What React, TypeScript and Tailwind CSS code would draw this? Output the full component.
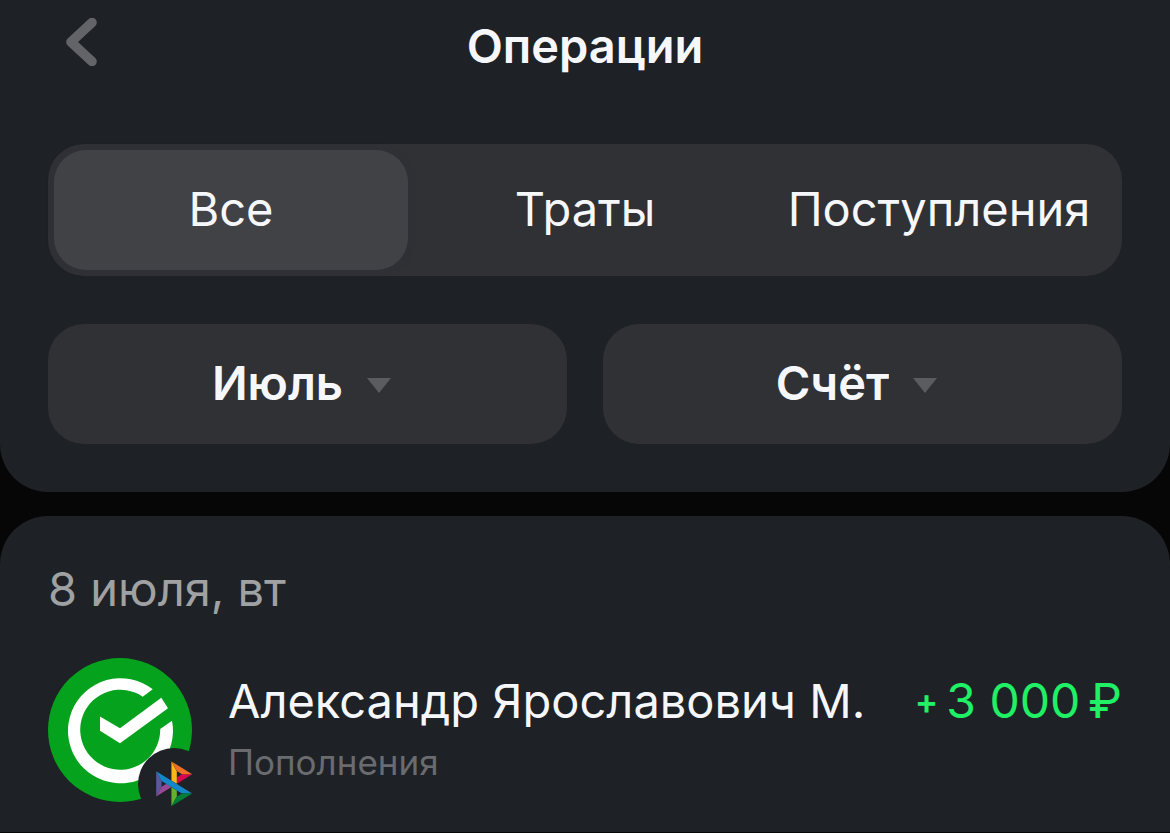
import { useState } from "react";

const tabs = ["Все", "Траты", "Поступления"];

function Filter({ id, label, options }: { id: string; label: string; options: string[] }) {
  return (
    <label
      htmlFor={id}
      className="flex h-[120px] items-center justify-center gap-6 rounded-[36px] bg-[#303135] pr-3 pb-0.5"
    >
      <select
        id={id}
        aria-label={label}
        className="field-sizing-content appearance-none bg-transparent text-[47px] leading-[56px] font-semibold text-[#f6f7fb] outline-none"
      >
        {options.map((o) => (
          <option key={o}>{o}</option>
        ))}
      </select>
      <svg width="24" height="15" viewBox="0 0 24 15" className="mt-1 shrink-0" aria-hidden="true">
        <path d="M0 0H24L12 15Z" fill="#5b5c60" />
      </svg>
    </label>
  );
}

function Avatar() {
  return (
    <svg
      width="144"
      height="144"
      viewBox="0 0 144 144"
      className="shrink-0 overflow-visible"
      aria-hidden="true"
    >
      <circle cx="72" cy="72" r="72" fill="#05a31d" />
      <path
        d="M104.7 31.3A52.5 52.5 0 1 0 124 62.7L112.2 71A40 40 0 1 1 94.7 38.7Z"
        fill="#fff"
      />
      <path d="M52 58.5L72 70.3L113.3 39.7L120 50.3L72 85.3L52 72.7Z" fill="#fff" />
      <circle cx="126" cy="126" r="36" fill="#1e2125" />
      <g transform="translate(108.2 103.4) scale(0.52 0.525)">
        <path d="M0 18.7L10.3 37.2V48.5L0 66.9Z" fill="#5b57a2" />
        <path d="M39.7 30.3L49.4 24.4H69.2L39.7 42.4Z" fill="#d90751" />
        <path d="M39.6 18.6L39.7 42.8L29.3 36.5V0Z" fill="#fab718" />
        <path d="M69.3 24.4H49.5L39.7 18.4L29.3 0Z" fill="#ed6f26" />
        <path d="M39.7 66.9V55.2L29.3 49V85.6Z" fill="#63b22f" />
        <path d="M0 66.9L29.5 48.9L19.6 42.8L10.3 48.5Z" fill="#984995" />
        <path d="M49.4 61.3L10.3 37.2L0 18.7L69.3 61.3Z" fill="#1487c9" />
        <path d="M29.3 85.6L39.7 66.9L49.4 61.3H69.3Z" fill="#017f36" />
      </g>
    </svg>
  );
}

export default function App() {
  const [active, setActive] = useState(0);

  return (
    <div className="flex min-h-screen flex-col gap-6 bg-[#060606] font-['Inter',sans-serif] text-[47px] leading-[56px] text-[#f6f7fb]">
      <header className="rounded-b-[48px] bg-[#1e2125] px-12 pt-[18px] pb-12">
        <div className="grid grid-cols-[1fr_auto_1fr] items-start">
          <button type="button" aria-label="Назад" className="w-fit pl-[18px]">
            <svg width="32" height="48" viewBox="0 0 32 48" fill="none" aria-hidden="true">
              <path
                d="M26 4.5L5 24L26 43.5"
                stroke="#636468"
                strokeWidth="9.6"
                strokeLinecap="round"
                strokeLinejoin="round"
              />
            </svg>
          </button>
          <h1 className="font-semibold">Операции</h1>
        </div>

        <div
          role="tablist"
          className="mt-[70px] grid grid-cols-3 rounded-[36px] bg-[#303135] p-1.5"
        >
          {tabs.map((tab, i) => (
            <button
              key={tab}
              type="button"
              role="tab"
              aria-selected={i === active}
              onClick={() => setActive(i)}
              className={
                i === active
                  ? "h-[120px] rounded-[32px] bg-[#414246] pb-0.5 shadow-[0_0_8px_rgba(40,44,60,0.2)]"
                  : "h-[120px] rounded-[32px] pb-0.5"
              }
            >
              {tab}
            </button>
          ))}
        </div>

        <div className="mt-12 grid grid-cols-2 gap-9">
          <Filter id="month" label="Месяц" options={["Июль"]} />
          <Filter id="account" label="Счёт" options={["Счёт"]} />
        </div>
      </header>

      <main className="rounded-t-[48px] bg-[#1e2125] px-12 pt-[45px] pb-[30px]">
        <h2 className="text-[#a0a1a3]">8 июля, вт</h2>
        <ul className="mt-[41px]">
          <li className="flex gap-9">
            <Avatar />
            <div className="min-w-0 flex-1 pt-[15px]">
              <div className="flex justify-between">
                <span>Александр Ярославович М.</span>
                <span className="flex shrink-0 items-center gap-2 text-[48px] text-[#1ff066]">
                  <span className="text-[35px] font-semibold">+</span>
                  <span>3 000</span>
                  <span>₽</span>
                </span>
              </div>
              <p className="mt-[9px] text-[35px] leading-[48px] text-[#6a6b6f]">Пополнения</p>
            </div>
          </li>
        </ul>
      </main>
    </div>
  );
}
